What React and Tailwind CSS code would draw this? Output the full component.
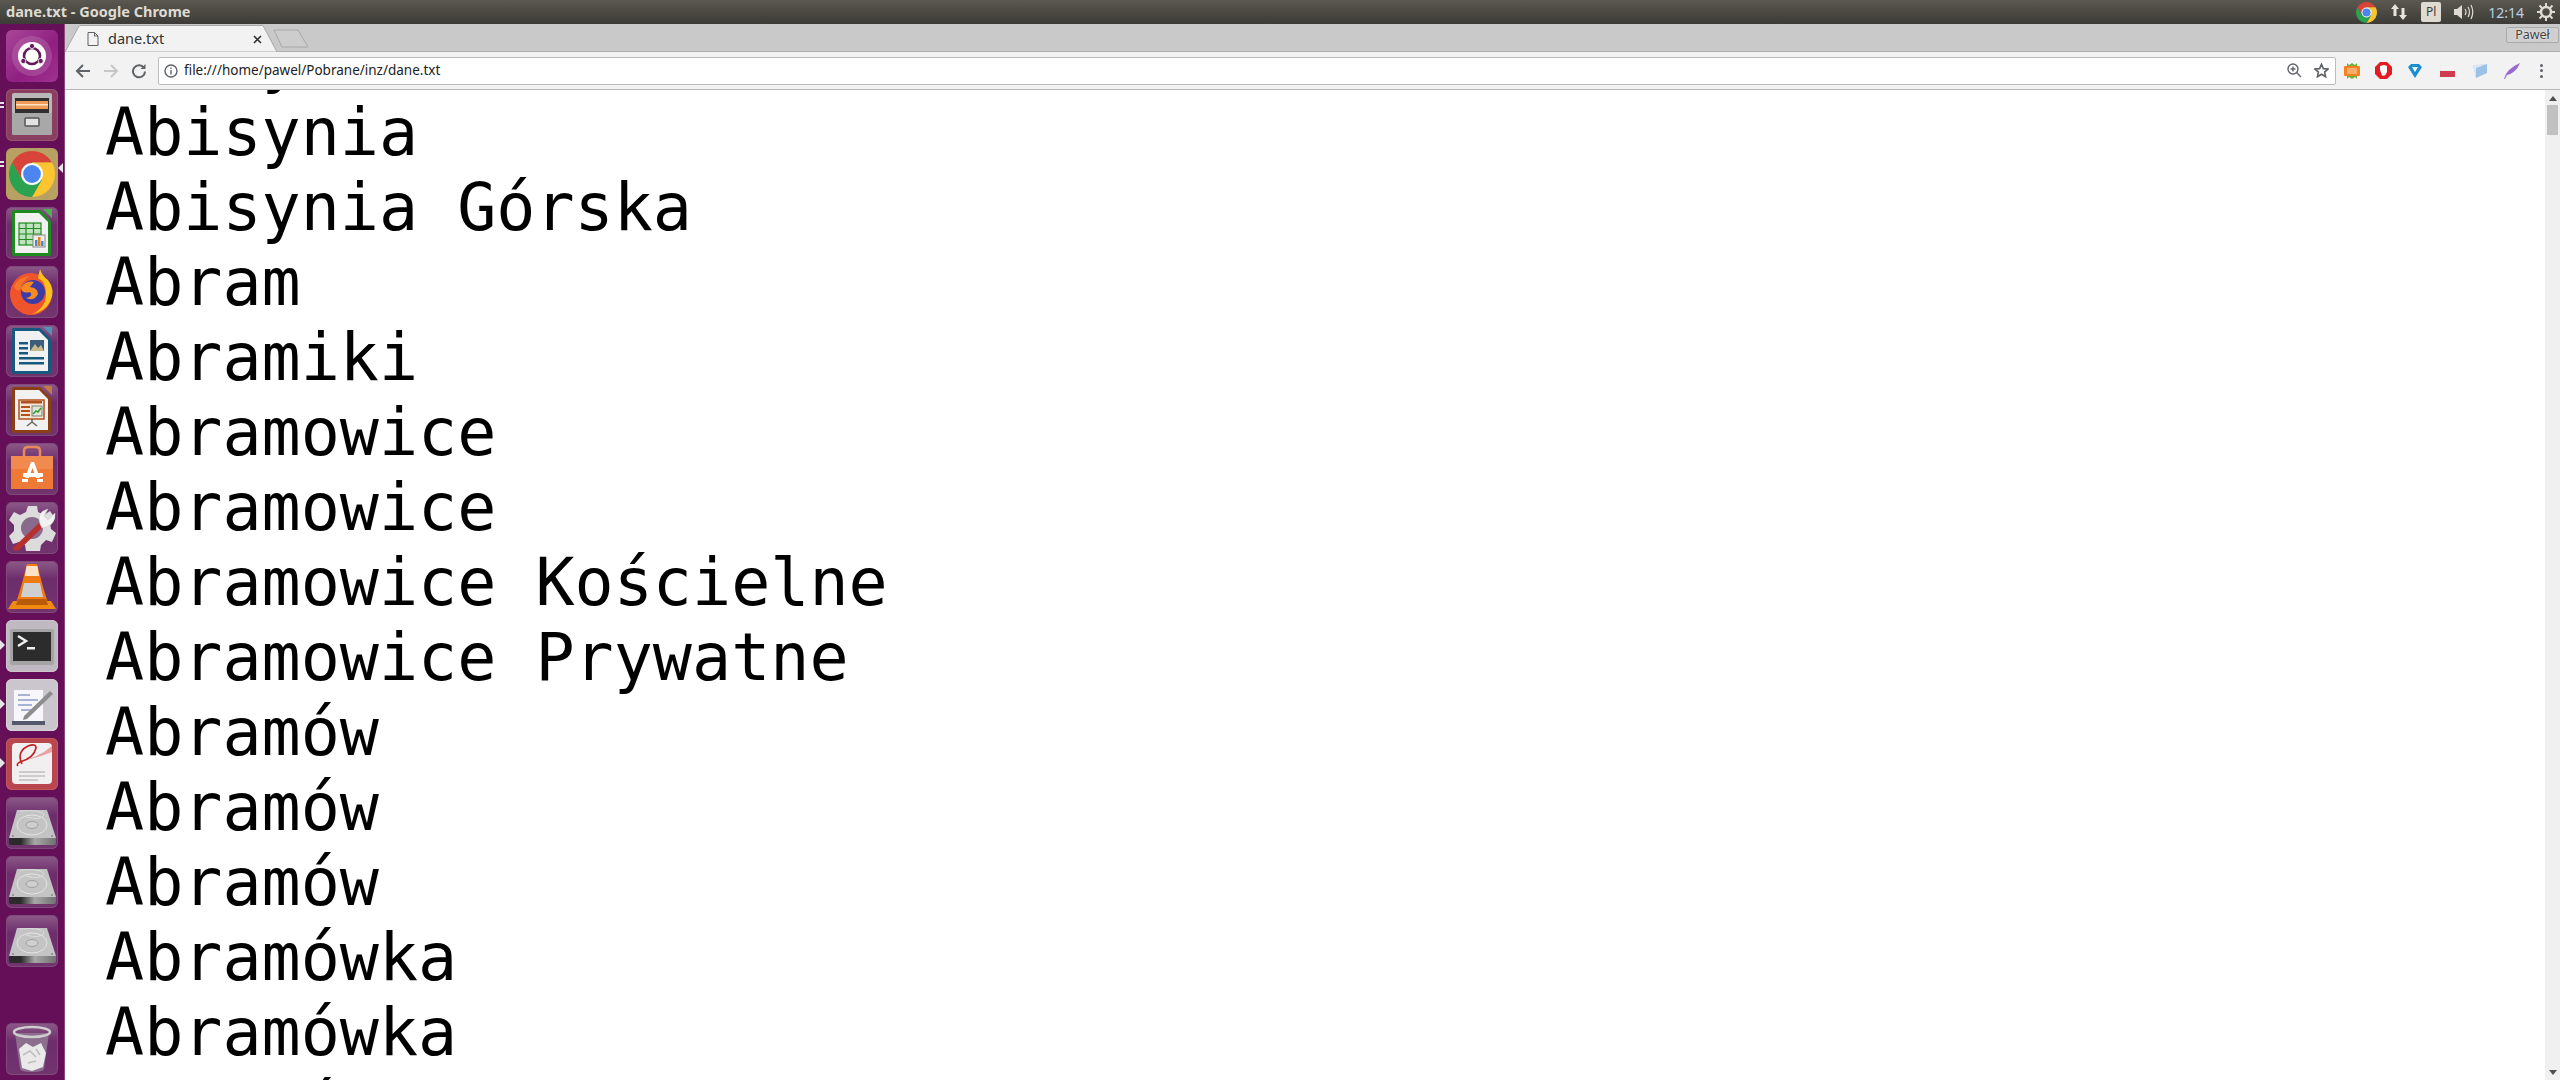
import React from 'react';

const lines = [
  'Abisynia',
  'Abisynia Górska',
  'Abram',
  'Abramiki',
  'Abramowice',
  'Abramowice',
  'Abramowice Kościelne',
  'Abramowice Prywatne',
  'Abramów',
  'Abramów',
  'Abramów',
  'Abramówka',
  'Abramówka',
  'Abramówka',
];

const Tile = ({ className, children }) => (
  <div className={`w-[52px] h-[52px] rounded-[6px] shrink-0 ${className}`}>
    <svg width="52" height="52" viewBox="0 0 52 52">{children}</svg>
  </div>
);

const purpleTile = 'bg-[linear-gradient(180deg,#8c5a88_0%,#6d2d6c_35%,#72346f_100%)] shadow-[inset_0_0_0_1px_#7d4a7b]';

const ChromeLogo = ({ size = 52 }) => (
  <svg width={size} height={size} viewBox="4 4 44 44">
    <path d="M6.95 15A22 22 0 0 1 45.05 15L26 15L16.5 31.5Z" fill="#d8433a" />
    <path d="M6.95 15A22 22 0 0 1 45.05 15L26 15L16.5 31.5Z" fill="#fbc430" transform="rotate(120 26 26)" />
    <path d="M6.95 15A22 22 0 0 1 45.05 15L26 15L16.5 31.5Z" fill="#2aa24f" transform="rotate(240 26 26)" />
    <circle cx="26" cy="26" r="10.5" fill="#fff" />
    <circle cx="26" cy="26" r="8.5" fill="#4a85f0" />
  </svg>
);

const LibreDoc = ({ color, corner, children }) => (
  <>
    <path d="M37 2H46V11Z" fill={corner} />
    <path d="M8 3H34L45 14V47Q45 49 43 49H8Q6 49 6 47V5Q6 3 8 3Z" fill={color} />
    <path d="M9 6H33L42 15V46H9Z" fill="#f1f1f1" />
    {children}
  </>
);

const HardDrive = ({ id }) => (
  <>
    <path d="M11 13H41L50 41H3Z" fill="#c4c4c4" />
    <path d="M3 41H50V46Q50 48 48 48H5Q3 48 3 46Z" fill={`url(#${id})`} />
    <ellipse cx="26" cy="28" rx="15" ry="10" fill="none" stroke="#e4e4e4" strokeWidth="1" />
    <ellipse cx="26" cy="28" rx="6" ry="3.5" fill="#cfcfcf" stroke="#9f9f9f" strokeWidth="1" />
    <path d="M14 14Q36 12 38 18Q34 24 20 20" fill="none" stroke="#dcdcdc" strokeWidth="1" />
    <circle cx="7" cy="39" r="1" fill="#888" />
    <circle cx="46" cy="39" r="1" fill="#888" />
    <defs>
      <linearGradient id={id} x1="0" x2="1" y1="0" y2="0">
        <stop offset="0" stopColor="#2b2b2b" />
        <stop offset="0.25" stopColor="#2b2b2b" />
        <stop offset="0.55" stopColor="#a8a8a8" />
        <stop offset="1" stopColor="#707070" />
      </linearGradient>
    </defs>
  </>
);

const Launcher = () => (
  <div className="w-[65px] shrink-0 h-full flex flex-col items-start gap-[7px] pt-[6px] pb-[5px] pl-[6px] bg-[#650f58] border-r border-[#8a4a7f] relative">
    {/* ubuntu */}
    <Tile className="bg-[linear-gradient(135deg,#a74798_0%,#8f1f80_60%,#a03291_100%)]">
      <circle cx="26" cy="26" r="20" fill="#c27fb7" opacity="0.35" />
      <circle cx="26" cy="26" r="14" fill="#fff" />
      <circle cx="26" cy="26" r="8" fill="none" stroke="#651b5a" strokeWidth="2.600" />
      <circle cx="26" cy="16" r="2.600" fill="#651b5a" stroke="#fff" strokeWidth="0.8" />
      <circle cx="17.300" cy="31" r="2.600" fill="#651b5a" stroke="#fff" strokeWidth="0.8" />
      <circle cx="34.700" cy="31" r="2.600" fill="#651b5a" stroke="#fff" strokeWidth="0.8" />
    </Tile>
    {/* files */}
    <Tile className="bg-[#8b3f60] shadow-[inset_0_0_0_1px_#95556f]">
      <path d="M6 6Q6 4 8 4H44Q46 4 46 6V44Q46 46 44 46H8Q6 46 6 44Z" fill="#b9b9b9" />
      <rect x="9" y="9" width="34" height="15" fill="#2f2f2f" />
      <rect x="10" y="12" width="32" height="8" fill="#ef9a55" />
      <rect x="10" y="15" width="32" height="1.5" fill="#fbe3c8" />
      <path d="M6 24H46V44Q46 46 44 46H8Q6 46 6 44Z" fill="#a8a8a8" />
      <rect x="19" y="29" width="14" height="8" rx="1" fill="#e2e2e2" stroke="#555" strokeWidth="1.5" />
    </Tile>
    {/* chrome */}
    <div className="w-[52px] h-[52px] rounded-[6px] shrink-0 bg-[#b89f62] flex items-center justify-center">
      <ChromeLogo size={46} />
    </div>
    {/* calc */}
    <Tile className={purpleTile}>
      <LibreDoc color="#1f8a1f" corner="#4fb04f">
        <g fill="none" stroke="#1f8a1f" strokeWidth="1.2">
          <rect x="13" y="16" width="22" height="22" fill="#bfe3bf" />
          <path d="M13 21.5H35M13 27H35M13 32.5H35M20 16V38M27.5 16V38" />
        </g>
        <rect x="27" y="28" width="12" height="12" fill="#eee" stroke="#888" />
        <rect x="29" y="33" width="2.5" height="6" fill="#3a8fd0" />
        <rect x="32" y="30" width="2.5" height="9" fill="#e8821e" />
        <rect x="35" y="34" width="2.5" height="5" fill="#3a8fd0" />
      </LibreDoc>
    </Tile>
    {/* firefox */}
    <Tile className={purpleTile}>
      <circle cx="25" cy="28" r="21" fill="#f0542d" />
      <path d="M34 3Q36 10 42 14Q50 24 44 36Q38 46 26 48Q40 42 40 28Q40 16 32 12Z" fill="#fdbf1e" />
      <circle cx="27" cy="26" r="12" fill="#3c3ba8" />
      <path d="M15 22Q20 14 28 16L24 21Q32 22 32 28Q28 36 20 32Q28 30 24 26Q16 28 15 22Z" fill="#f88a24" />
      <path d="M8 20Q14 10 24 10Q16 14 14 24Q10 26 8 20Z" fill="#f7752a" />
    </Tile>
    {/* writer */}
    <Tile className={purpleTile}>
      <LibreDoc color="#16587e" corner="#4f94b8">
        <rect x="13" y="17" width="9" height="2.5" fill="#16587e" />
        <rect x="13" y="22" width="9" height="2.5" fill="#16587e" />
        <rect x="13" y="27" width="9" height="2.5" fill="#16587e" />
        <rect x="24" y="15" width="14" height="11" fill="#3c5d7a" />
        <path d="M24 26L29 19L32 23L35 20L38 26Z" fill="#c9b98f" />
        <rect x="13" y="32" width="25" height="2.5" fill="#16587e" />
        <rect x="13" y="37" width="25" height="2.5" fill="#16587e" />
      </LibreDoc>
    </Tile>
    {/* impress */}
    <Tile className={purpleTile}>
      <LibreDoc color="#8a3f17" corner="#c47a45">
        <rect x="13" y="16" width="25" height="19" fill="#f5e7d8" stroke="#b3501c" strokeWidth="1.5" />
        <rect x="15" y="17" width="21" height="2.5" fill="#b3501c" />
        <rect x="15" y="22" width="9" height="2" fill="#b3501c" />
        <rect x="15" y="26" width="9" height="2" fill="#b3501c" />
        <rect x="15" y="30" width="9" height="2" fill="#b3501c" />
        <rect x="26" y="22" width="10" height="10" fill="#dfe8d6" stroke="#555" strokeWidth="0.7" />
        <path d="M27 30L30 27L32 28L35 24" fill="none" stroke="#3a9a3a" strokeWidth="1.5" />
        <path d="M26 35V39M26 38L21 42M26 38L31 42" stroke="#666" strokeWidth="1.5" fill="none" />
      </LibreDoc>
    </Tile>
    {/* app store */}
    <Tile className={purpleTile}>
      <path d="M18 14V8Q18 4 22 4H30Q34 4 34 8V14" fill="none" stroke="#e7895a" strokeWidth="2.5" />
      <path d="M5 13H47V46H5Z" fill="#ee7a35" />
      <path d="M5 13H47V26H5Z" fill="#f08a4f" />
      <path d="M19 35L25 19H28L34 35H30L26.5 25L23 35Z" fill="#fff" />
      <rect x="17" y="30" width="20" height="4" rx="1" fill="#fff" />
      <rect x="16" y="36" width="6" height="3" fill="#fff" />
      <rect x="31" y="36" width="6" height="3" fill="#fff" />
    </Tile>
    {/* settings */}
    <Tile className={purpleTile}>
      <path d="M22 4H31L32 10L38 13L44 9L49 16L44 21L45 27L50 31L46 40L40 38L35 43L34 49H20L19 43L13 40L7 42L3 34L8 29V23L3 18L8 10L14 13L20 10Z" fill="#dcdcdc" />
      <circle cx="26" cy="26" r="11" fill="#8a6a8c" />
      <path d="M9 44L34 20L38 24L13 48Q8 50 7 47Q6 45 9 44Z" fill="#b8302e" />
      <path d="M34 22Q30 10 42 7L38 14L42 18L49 11Q50 24 36 26Z" fill="#f2f2f2" stroke="#c9c9c9" strokeWidth="0.5" />
    </Tile>
    {/* vlc */}
    <Tile className={purpleTile}>
      <path d="M21 3H31L37 26L42 42H10L15 26Z" fill="#ee7c12" />
      <path d="M20.5 5H31.5L33 15H19Z" fill="#fbe3c8" />
      <path d="M18 22H34L37 36H15Z" fill="#cfcfcf" />
      <path d="M7 40H45L50 48H2Z" fill="#f08a10" />
      <path d="M12 38H40L42 44H10Z" fill="#b85a08" />
    </Tile>
    {/* terminal */}
    <Tile className="bg-[#c1b9c1] shadow-[inset_0_0_0_1px_#cbc5cb]">
      <rect x="4" y="9" width="44" height="36" rx="2" fill="#a4a4a4" />
      <rect x="7" y="12" width="38" height="29" fill="#2c2c2c" />
      <path d="M12 16L20 21L12 26" fill="none" stroke="#eee" strokeWidth="2.5" />
      <rect x="21" y="27" width="8" height="2.5" fill="#eee" />
    </Tile>
    {/* gedit */}
    <Tile className="bg-[#cbc5cd] shadow-[inset_0_0_0_1px_#d5d0d6]">
      <path d="M8 11H37V42H8Z" fill="#f7f7fb" />
      <path d="M12 16H24M12 21H32M12 26H26M15 31H26" stroke="#8f9fc9" strokeWidth="1.5" />
      <path d="M18 37L44 12L47 15L21 40L17 41Z" fill="#8d8d8d" />
      <path d="M6 42H39V46H6Z" fill="#54586a" />
    </Tile>
    {/* evince */}
    <Tile className="bg-[#b9454f] shadow-[inset_0_0_0_1px_#c0595f]">
      <rect x="6" y="5" width="40" height="41" rx="4" fill="#f1efef" />
      <path d="M8 24Q26 22 46 14V8Q30 22 8 24Z" fill="#e8a0a0" />
      <path d="M16 26Q10 14 22 8Q30 5 30 10Q28 20 14 24Q10 26 12 28" fill="none" stroke="#c61f24" strokeWidth="1.6" />
      <path d="M13 34H39M13 38H39M13 42H32" stroke="#a8a8a8" strokeWidth="1" />
    </Tile>
    <Tile className={purpleTile}><HardDrive id="hdd1" /></Tile>
    <Tile className={purpleTile}><HardDrive id="hdd2" /></Tile>
    <Tile className={purpleTile}><HardDrive id="hdd3" /></Tile>
    {/* trash */}
    <Tile className={`${purpleTile} mt-auto`}>
      <path d="M9 10L14 46Q15 49 26 49Q37 49 38 46L43 10Z" fill="#8b6f8d" />
      <path d="M13 26L20 20L27 24L35 20L40 30L37 44L26 48L16 45Z" fill="#e9e9e9" />
      <path d="M17 32L24 28L30 34M22 40L30 38M30 26L34 32" stroke="#bdbdbd" strokeWidth="1.5" fill="none" />
      <ellipse cx="26" cy="9" rx="18" ry="5" fill="none" stroke="#cfcfcf" strokeWidth="2.5" />
    </Tile>
    {/* launcher pips */}
    <span className="absolute left-0 top-[78px] w-[4px] h-[2px] bg-[#e6e6e6]" />
    <span className="absolute left-0 top-[82px] w-[4px] h-[2px] bg-[#e6e6e6]" />
    <span className="absolute left-0 top-[137px] w-[4px] h-[2px] bg-[#e6e6e6]" />
    <span className="absolute left-0 top-[141px] w-[4px] h-[2px] bg-[#e6e6e6]" />
    <span className="absolute right-[1px] top-[139px] w-0 h-0 border-y-[5px] border-y-transparent border-r-[5px] border-r-[#e6e6e6]" />
    <span className="absolute left-0 top-[616px] w-0 h-0 border-y-[5px] border-y-transparent border-l-[5px] border-l-[#e6e6e6]" />
    <span className="absolute left-0 top-[675px] w-0 h-0 border-y-[5px] border-y-transparent border-l-[5px] border-l-[#e6e6e6]" />
    <span className="absolute left-0 top-[734px] w-0 h-0 border-y-[5px] border-y-transparent border-l-[5px] border-l-[#e6e6e6]" />
  </div>
);

const TopBar = () => (
  <div className="h-[24px] shrink-0 flex items-center bg-[linear-gradient(180deg,#5a584f_0%,#3c3b37_100%)] text-[#dfdbd2]">
    <span className="pl-[6px] text-[14.500px] font-bold font-['Noto_Sans',sans-serif]">dane.txt - Google Chrome</span>
    <div className="ml-auto flex items-center">
      <div className="mr-[13px]"><ChromeLogo size={21} /></div>
      <svg width="18" height="18" viewBox="0 0 18 18" className="mr-[13px]" fill="#e8e4dc">
        <path d="M5 1L9 6H6.500V13H3.500V6H1Z" />
        <path d="M13 17L9 12H11.500V5H14.500V12H17Z" />
      </svg>
      <div className="w-[20px] h-[20px] mr-[13px] rounded-[2px] bg-[#dfdbd2] text-[#3c3b37] text-[12px] font-['Noto_Sans',sans-serif] flex items-center justify-center">Pl</div>
      <svg width="20" height="18" viewBox="0 0 20 18" className="mr-[14px]" fill="none" stroke="#dfdbd2" strokeWidth="1.2">
        <path d="M0 6H3L8 2V16L3 12H0Z" fill="#dfdbd2" stroke="none" />
        <path d="M11 6Q13 9 11 12M14 4Q17 9 14 14M17 2Q20.500 9 17 16" />
      </svg>
      <span className="text-[14px] mr-[13px] text-[#bcd0e0] font-['Noto_Sans',sans-serif]">12:14</span>
      <svg width="18" height="18" viewBox="0 0 18 18" className="mr-[5px]" fill="none" stroke="#dfdbd2" strokeWidth="2.5">
        <circle cx="9" cy="9" r="5" />
        <path d="M9 0V4M9 14V18M0 9H4M14 9H18M2.500 2.500L5 5M13 13L15.500 15.500M2.500 15.500L5 13M13 5L15.500 2.500" strokeWidth="2" />
      </svg>
    </div>
  </div>
);

const TabStrip = () => (
  <div className="h-[28px] shrink-0 flex items-end bg-[#c9c9c9] relative border-b border-[#b0b0b0]">
    <div className="relative w-[212px] h-[27px] -mb-[1px] flex items-center pl-[22px] pr-[44px]">
      <svg className="absolute inset-0" width="212" height="27" viewBox="0 0 212 27">
        <path d="M0 27L14 1Q14.500 0.500 16 0.500H198L212 27Z" fill="#f2f2f2" stroke="#a8a8a8" strokeWidth="1" />
      </svg>
      <svg className="relative mr-[9px]" width="12" height="14" viewBox="0 0 12 14" fill="none" stroke="#5f6368" strokeWidth="1">
        <path d="M1 .5H7.500L11 4V13.500H1ZM7.500 .5V4H11" />
      </svg>
      <span className="relative text-[14.500px] text-[#333] font-['Noto_Sans',sans-serif]">dane.txt</span>
      <svg className="absolute left-[188px] top-[10px]" width="9" height="9" viewBox="0 0 9 9" stroke="#333" strokeWidth="1.6">
        <path d="M1 1L8 8M8 1L1 8" />
      </svg>
    </div>
    <svg className="ml-[-4px] mb-[3px]" width="36" height="19" viewBox="0 0 36 19" fill="#cdcdcd" stroke="#a8a8a8">
      <path d="M1 1H25L35 18H9Z" strokeLinejoin="round" />
    </svg>
    <div className="absolute right-[1px] top-[3px] w-[53px] h-[16px] rounded-[2px] border border-[#aaa] bg-[#cfcfcf] text-[12.500px] text-[#444] leading-[14px] text-center [text-shadow:0_0_2px_#fff] font-['Noto_Sans',sans-serif]">Paweł</div>
  </div>
);

const Toolbar = () => (
  <div className="h-[38px] shrink-0 flex items-center bg-[#f2f2f2] border-b border-[#b8b8b8]">
    <svg className="ml-[10px]" width="16" height="16" viewBox="0 0 16 16" fill="none" stroke="#5f6368" strokeWidth="2">
      <path d="M15 8H2M8 2L2 8L8 14" />
    </svg>
    <svg className="ml-[12px]" width="16" height="16" viewBox="0 0 16 16" fill="none" stroke="#c6c6c6" strokeWidth="2">
      <path d="M1 8H14M8 2L14 8L8 14" />
    </svg>
    <svg className="ml-[12px]" width="16" height="16" viewBox="0 0 16 16" fill="none" stroke="#5f6368" strokeWidth="2">
      <path d="M13 5A6 6 0 1 0 14 8.500" />
      <path d="M14.500 1V6H9.500Z" fill="#5f6368" stroke="none" />
    </svg>
    <div className="ml-[11px] w-[2178px] h-[28px] bg-white border border-[#bdbdbd] rounded-[2px] flex items-center pl-[5px] pr-[6px]">
      <svg width="14" height="14" viewBox="0 0 14 14" fill="none" stroke="#5f6368" strokeWidth="1.4">
        <circle cx="7" cy="7" r="6" />
        <path d="M7 6V10.500M7 3.500V5" />
      </svg>
      <span className="ml-[6px] text-[13.500px] text-[#222] font-['Noto_Sans',sans-serif]">file:///home/pawel/Pobrane/inz/dane.txt</span>
      <svg className="ml-auto mr-[6px]" width="15" height="15" viewBox="0 0 15 15" fill="none" stroke="#5f6368" strokeWidth="1.4">
        <circle cx="6" cy="6" r="5" />
        <path d="M9.500 9.500L14 14M3.500 6H8.500M6 3.500V8.500" />
      </svg>
      <svg className="ml-[6px]" width="15" height="15" viewBox="0 0 24 24" fill="none" stroke="#5f6368" strokeWidth="2.600">
        <path d="M12 2L15 9L22.500 9.500L17 14.500L18.500 22L12 18L5.500 22L7 14.500L1.500 9.500L9 9Z" />
      </svg>
    </div>
    <div className="flex items-center ml-[8px]">
      {/* extensions */}
      <svg width="16" height="16" viewBox="0 0 16 16">
        <path d="M3 0L5 2L8 0L11 2L13 0V16L11 14L8 16L5 14L3 16Z" fill="#6fb03e" />
        <rect x="0" y="3" width="16" height="10" rx="1" fill="#f58220" />
        <rect x="3" y="5" width="10" height="6" fill="#fff" opacity="0.35" />
      </svg>
      <svg className="ml-[15px]" width="17" height="17" viewBox="0 0 17 17">
        <path d="M5 0H12L17 5V12L12 17H5L0 12V5Z" fill="#e31c23" />
        <path d="M5 8V4L7 3.500L9 3L12 4V10L10 13.500H7Z" fill="#fff" />
      </svg>
      <svg className="ml-[15px]" width="16" height="16" viewBox="0 0 16 16">
        <path d="M1 4L4 1H12L15 4L8 15Z" fill="#1c8ed4" />
        <path d="M5 4H11L8 9Z" fill="#fff" />
      </svg>
      <svg className="ml-[17px]" width="15" height="12" viewBox="0 0 15 12">
        <rect width="15" height="6" fill="#f4f4f4" stroke="#ddd" strokeWidth="0.5" />
        <rect y="6" width="15" height="6" fill="#cf3c50" />
      </svg>
      <svg className="ml-[18px]" width="14" height="15" viewBox="0 0 14 15">
        <path d="M0 2H6L14 1V10L3 15Z" fill="#9cc1e6" />
        <path d="M0 2L3 15V5L14 1Z" fill="#dbe8f5" />
      </svg>
      <svg className="ml-[17px]" width="16" height="16" viewBox="0 0 16 16">
        <path d="M0 16Q2 6 16 0Q12 10 3 12L1 16Z" fill="#9b6ad0" />
      </svg>
      <div className="ml-[20px] flex flex-col gap-[2.500px]">
        <span className="w-[3px] h-[3px] rounded-full bg-[#5f6368]" />
        <span className="w-[3px] h-[3px] rounded-full bg-[#5f6368]" />
        <span className="w-[3px] h-[3px] rounded-full bg-[#5f6368]" />
      </div>
    </div>
  </div>
);

const Scrollbar = () => (
  <div className="w-[15px] shrink-0 h-full bg-[#f0f0f0] flex flex-col items-center">
    <span className="mt-[6px] w-0 h-0 border-x-[4px] border-x-transparent border-b-[5px] border-b-[#505050]" />
    <div className="mt-[4px] w-[11px] h-[30px] bg-[#c1c1c1]" />
    <span className="mt-auto mb-[5px] w-0 h-0 border-x-[4px] border-x-transparent border-t-[5px] border-t-[#505050]" />
  </div>
);

export default function App() {
  return (
    <div className="w-[2560px] h-[1080px] flex flex-col overflow-hidden bg-white">
      <TopBar />
      <div className="flex-1 min-h-0 flex">
        <Launcher />
        <div className="flex-1 min-w-0 flex flex-col">
          <TabStrip />
          <Toolbar />
          <div className="flex-1 min-h-0 flex">
            <div className="flex-1 min-w-0 overflow-hidden pl-[40px]">
              <div className="mt-[-70px] text-[65px] leading-[75px] text-black font-['DejaVu_Sans_Mono',monospace] whitespace-pre">
                <div>Abisy</div>
                {lines.map((line, i) => (
                  <div key={i}>{line}</div>
                ))}
              </div>
            </div>
            <Scrollbar />
          </div>
        </div>
      </div>
    </div>
  );
}
